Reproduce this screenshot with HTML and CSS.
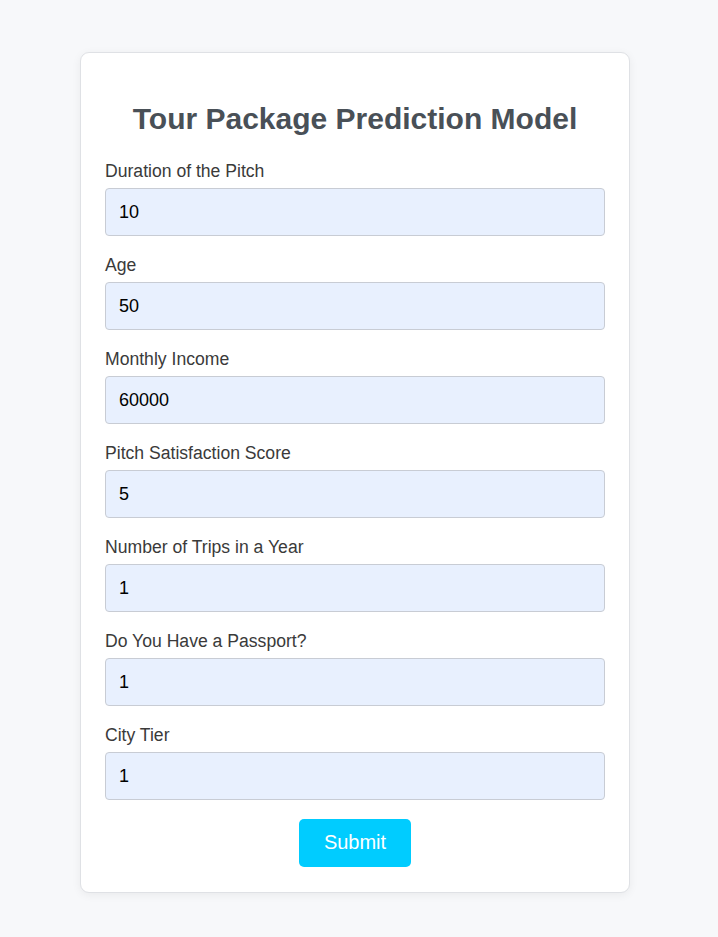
FILE: index.html
```html
<!DOCTYPE html>
<html>
<head>
<meta charset="utf-8">
<link rel="stylesheet" href="styles.css">
</head>
<body>
<div class="card">
  <h1 class="title">Tour Package Prediction Model</h1>
  <form class="form">
    <div class="group">
      <label class="label">Duration of the Pitch</label>
      <input class="input" type="text" value="10">
    </div>
    <div class="group">
      <label class="label">Age</label>
      <input class="input" type="text" value="50">
    </div>
    <div class="group">
      <label class="label">Monthly Income</label>
      <input class="input" type="text" value="60000">
    </div>
    <div class="group">
      <label class="label">Pitch Satisfaction Score</label>
      <input class="input" type="text" value="5">
    </div>
    <div class="group">
      <label class="label">Number of Trips in a Year</label>
      <input class="input" type="text" value="1">
    </div>
    <div class="group">
      <label class="label">Do You Have a Passport?</label>
      <input class="input" type="text" value="1">
    </div>
    <div class="group">
      <label class="label">City Tier</label>
      <input class="input" type="text" value="1">
    </div>
    <div class="actions">
      <button class="submit" type="button">Submit</button>
    </div>
  </form>
</div>
</body>
</html>
```
FILE: styles.css
```css
html, body {
  margin: 0;
  padding: 0;
  background: #f7f8fa;
  font-family: "Liberation Sans", Arial, sans-serif;
}
body {
  padding: 52px 0 40px 80px;
}
.card {
  box-sizing: border-box;
  width: 550px;
  background: #ffffff;
  border: 1px solid #dfe1e5;
  border-radius: 9px;
  box-shadow: 0 2px 10px rgba(0, 0, 0, 0.06);
  padding: 25px 24px 25px;
}
.title {
  margin: 23px 0 24px;
  text-align: center;
  font-size: 30px;
  font-weight: bold;
  color: #495057;
  line-height: 35px;
}
.form {
  margin: 0;
}
.group {
  display: flex;
  flex-direction: column;
  margin-bottom: 18px;
}
.label {
  font-size: 17.6px;
  line-height: 23px;
  color: #3a3a3a;
  margin-bottom: 5px;
}
.input {
  box-sizing: border-box;
  height: 48px;
  width: 100%;
  padding: 0 13px;
  font-family: "Liberation Sans", Arial, sans-serif;
  font-size: 18px;
  color: #000;
  background: #e8f0fe;
  border: 1px solid #c8ccd4;
  border-radius: 4px;
  outline: none;
}
.actions {
  display: flex;
  justify-content: center;
  padding-top: 1px;
}
.submit {
  width: 112px;
  height: 48px;
  border: none;
  border-radius: 5px;
  background: #00ccff;
  color: #ffffff;
  font-family: "Liberation Sans", Arial, sans-serif;
  font-size: 20px;
  line-height: 46px;
  padding: 0 0 2px;
  cursor: pointer;
}
```
